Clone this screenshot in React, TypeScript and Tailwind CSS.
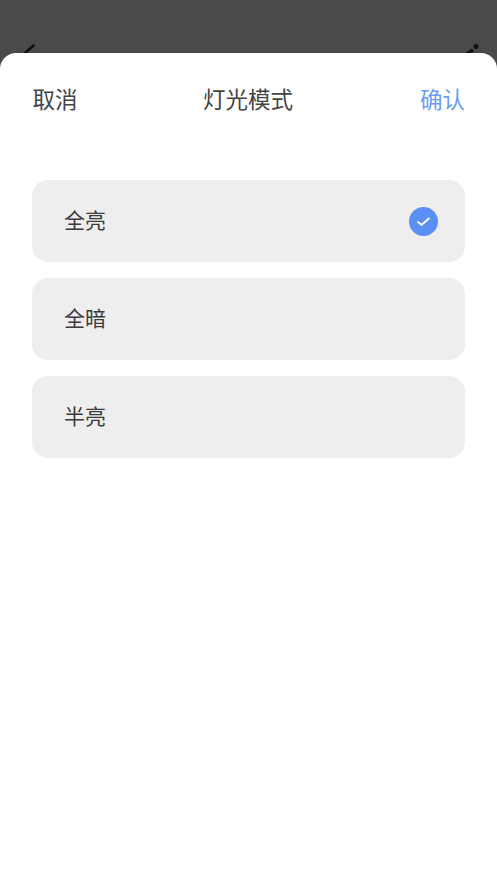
import React from "react";

const rows = ["全亮", "全暗", "半亮"];

export default function App() {
  return (
    <div
      className="relative flex h-[883px] w-[497px] flex-col overflow-hidden bg-[#4a4a4c]"
      style={{ fontFamily: '"Noto Sans CJK SC", "Noto Sans", sans-serif' }}
    >
      <svg className="absolute left-[22px] top-[43px]" width="14" height="12" viewBox="0 0 14 12">
        <path d="M2 11 L11.5 2.5" stroke="#111" strokeWidth="2.6" strokeLinecap="round" fill="none" />
      </svg>
      <svg className="absolute left-[464px] top-[43px]" width="16" height="12" viewBox="0 0 16 12">
        <path d="M3 11 L9 7" stroke="#111" strokeWidth="3.6" fill="none" />
        <circle cx="12" cy="3.5" r="2.5" fill="#111" />
      </svg>
      <div className="relative mt-[53px] flex flex-1 flex-col rounded-t-[16px] bg-white px-[32px]">
        <div className="mt-[27px] flex h-[36px] items-center justify-between text-[22.5px] leading-[36px] text-[#444444]">
          <span className="ml-[0.5px]">取消</span>
          <span className="mr-[1.5px]">灯光模式</span>
          <span className="text-[#6b9bf7]">确认</span>
        </div>
        <div className="mt-[64px] flex flex-col gap-[16px]">
          {rows.map((label, i) => (
            <div
              key={label}
              className="flex h-[82px] items-center justify-between rounded-[16px] bg-[#eeeeee] pl-[32px] pr-[27px] text-[21px] text-[#3a3a3a]"
            >
              <span className="mb-[2px]">{label}</span>
              {i === 0 && (
                <span className="flex h-[29px] w-[29px] items-center justify-center rounded-full bg-[#5c8ff3]">
                  <svg width="15" height="12" viewBox="0 0 15 12">
                    <path d="M1.5 6.5 L5.5 10 L13.5 3" stroke="#fff" strokeWidth="1.7" fill="none" />
                  </svg>
                </span>
              )}
            </div>
          ))}
        </div>
      </div>
    </div>
  );
}
